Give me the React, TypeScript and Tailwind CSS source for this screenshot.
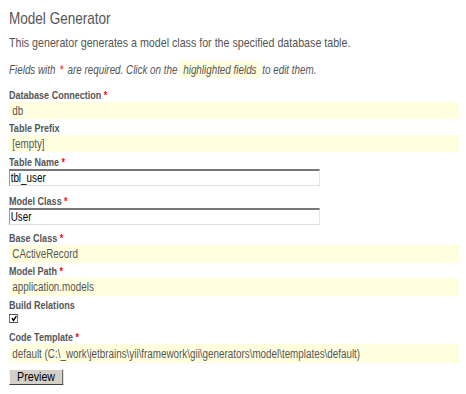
import React from "react";

const Req = () => <span className="text-[#ff0000] ml-[3px]">*</span>;

function Label({ text, req }: { text: string; req?: boolean }) {
  return (
    <div className="h-[13px] leading-[13px] text-[11px] font-bold text-[#555]">
      {text}
      {req && <Req />}
    </div>
  );
}

function Band({ text, h }: { text: string; h: string }) {
  return (
    <div className={`${h} flex items-center bg-[#ffffe0] pl-[4px] text-[12px] text-[#555] w-[549px]`}>
      {text}
    </div>
  );
}

function Input({ value }: { value: string }) {
  return (
    <div className="h-[17px] w-[379px] bg-white border-t-2 border-l border-t-[#777] border-l-[#888] border-r border-b border-r-[#ddd] border-b-[#ddd] text-[12px] leading-[14px] pl-[1px] text-black">
      {value}
    </div>
  );
}

export default function App() {
  return (
    <div className="w-[466px] h-[394px] bg-white overflow-hidden">
      <div className="w-[568px] origin-top-left scale-x-[0.82] pl-[11px] font-['Liberation_Sans',Arial,sans-serif]">
        <div className="pt-[7px] h-[30px] text-[16.5px] leading-[22px] text-[#555]">Model Generator</div>
        <div className="mt-[6px] text-[13px] leading-[14px] text-[#555]">
          This generator generates a model class for the specified database table.
        </div>
        <div className="mt-[11px] h-[17px] text-[12px] italic text-[#555] flex items-center">
          <span>Fields with</span>
          <span className="text-[#ff0000] mx-[5px]">*</span>
          <span>are required. Click on the</span>
          <span className="bg-[#ffffe0] h-[17px] flex items-center px-[5px] mx-[2px]">highlighted fields</span>
          <span>to edit them.</span>
        </div>
        <div className="mt-[11px]">
          <Label text="Database Connection" req />
          <Band text="db" h="h-[17px]" />
        </div>
        <div className="mt-[3px]">
          <Label text="Table Prefix" />
          <Band text="[empty]" h="h-[17px]" />
        </div>
        <div className="mt-[4px]">
          <Label text="Table Name" req />
          <Input value="tbl_user" />
        </div>
        <div className="mt-[9px]">
          <Label text="Model Class" req />
          <Input value="User" />
        </div>
        <div className="mt-[7px]">
          <Label text="Base Class" req />
          <Band text="CActiveRecord" h="h-[18px]" />
        </div>
        <div className="mt-[2px]">
          <Label text="Model Path" req />
          <Band text="application.models" h="h-[18px]" />
        </div>
        <div className="mt-[3px]">
          <Label text="Build Relations" />
          <div className="mt-[2px] w-[11px] h-[9px] border border-[#555] bg-white flex items-center justify-center">
            <svg width="8" height="7" viewBox="0 0 8 7">
              <path d="M1.5 3 L3.5 5.5 L7 1" stroke="#000" strokeWidth="1.5" fill="none" />
            </svg>
          </div>
        </div>
        <div className="mt-[8px]">
          <Label text="Code Template" req />
          <Band text="default (C:\_work\jetbrains\yii\framework\gii\generators\model\templates\default)" h="h-[19px]" />
        </div>
        <div className="mt-[6px] flex">
          <button className="w-[66px] h-[16px] flex items-center justify-center bg-[#d4d0c8] border border-t-[#fff] border-l-[#fff] border-r-[#404040] border-b-[#404040] text-[13px] text-black">
            Preview
          </button>
        </div>
      </div>
    </div>
  );
}
